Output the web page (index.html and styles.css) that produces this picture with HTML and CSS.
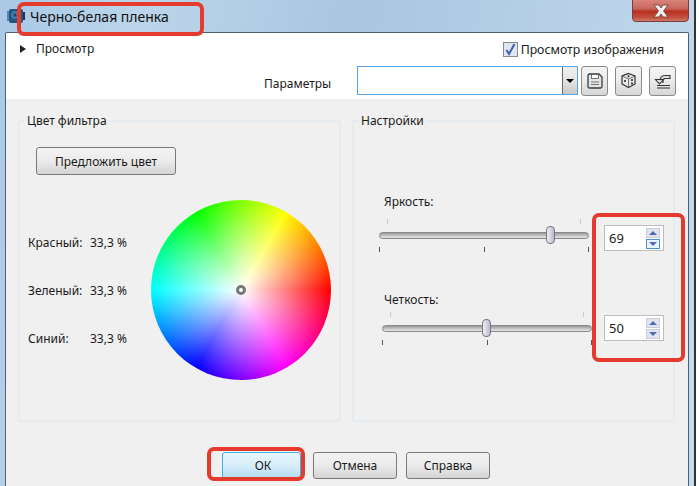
FILE: index.html
```html
<!DOCTYPE html>
<html lang="ru">

<head>
    <meta charset="UTF-8" />
    <title>Черно-белая пленка</title>
    <link rel="stylesheet" href="styles.css">
</head>

<body>
    <div class="screen">
        <div class="titlebar">
            <svg class="app-icon" width="20" height="16" viewBox="0 0 20 16">
                <path d="M1 3h3v10h-3z" fill="#4f86b4" />
                <path d="M3 3a2 2 0 0 1 2-2h10a2 2 0 0 1 2 2v10a2 2 0 0 1-2 2h-10a2 2 0 0 1-2-2z" fill="#24557e" />
                <circle cx="9" cy="7" r="4" fill="#3f7ba8" />
                <circle cx="9" cy="7" r="1.500" fill="#1c4464" />
                <path d="M17 4h2v8h-2z" fill="#16324e" />
            </svg>
            <span class="title">Черно-белая пленка</span>
            <div class="close">
                <svg width="22" height="14" viewBox="0 0 22 14">
                    <path d="M4 1h5l2 3 2-3h5l-4.500 6 4.500 6h-5l-2-3-2 3h-5l4.500-6z" fill="#f4eeee" stroke="#6b3a3a" stroke-width="0.800" />
                </svg>
            </div>
        </div>

        <div class="client">
            <div class="top">
                <div class="top-row">
                    <div class="expander">
                        <span class="arrow"></span>
                        <span>Просмотр</span>
                    </div>
                    <label class="check">
                        <span class="checkbox">
                            <svg width="13" height="13" viewBox="0 0 13 13">
                                <path d="M2.500 7l2.500 4 5.500-10" fill="none" stroke="#3f5fb0" stroke-width="2" />
                            </svg>
                        </span>
                        <span>Просмотр изображения</span>
                    </label>
                </div>
                <div class="params-row">
                    <span class="params-label">Параметры</span>
                    <div class="combo">
                        <span class="combo-btn"><span class="combo-arrow"></span></span>
                    </div>
                    <button class="icon-btn">
                        <svg width="16" height="16" viewBox="0 0 16 16">
                            <path d="M2.500 1h9.500l3 3v9.500a1.500 1.500 0 0 1-1.500 1.500h-11a1.500 1.500 0 0 1-1.500-1.500v-11a1.500 1.500 0 0 1 1.500-1.500z" fill="#e4e4e4" stroke="#3c3c3c" stroke-width="1.300" />
                            <rect x="4.500" y="1.500" width="7" height="4" fill="#fff" stroke="#555" stroke-width="0.800" />
                            <path d="M4 9h8M4 11.500h8" stroke="#777" stroke-width="1" />
                        </svg>
                    </button>
                    <button class="icon-btn">
                        <svg width="17" height="17" viewBox="0 0 17 17">
                            <path d="M8.500 1.500l6.500 2.500v8l-6.500 3.500-6.500-3.500v-8z" fill="#e8e8e8" stroke="#333" stroke-width="1.200" />
                            <path d="M2 4l6.500 3 6.500-3M8.500 7v8.500" fill="none" stroke="#555" stroke-width="0.800" />
                            <circle cx="8.500" cy="4.200" r="1" fill="#222" />
                            <circle cx="5" cy="9" r="1" fill="#222" />
                            <circle cx="12" cy="8" r="1" fill="#222" />
                            <circle cx="12" cy="11.500" r="1" fill="#222" />
                        </svg>
                    </button>
                    <button class="icon-btn">
                        <svg width="18" height="17" viewBox="0 0 18 17">
                            <path d="M6 11v-2.500c0-3 2-5 5-5h5v3h-5c-1 0-2 1-2 2v2.500" fill="#e0e0e0" stroke="#333" stroke-width="1.100" />
                            <path d="M1.500 7.500h8l-4 4.500z" fill="#e0e0e0" stroke="#333" stroke-width="1.100" />
                            <path d="M3 13.500h13M3 16h13" stroke="#333" stroke-width="1.200" />
                        </svg>
                    </button>
                </div>
            </div>

            <div class="main">
                <div class="panels">
                    <fieldset class="panel">
                        <legend>Цвет фильтра</legend>
                        <div class="color-content">
                            <button class="btn suggest-btn">Предложить цвет</button>
                            <div class="color-body">
                                <div class="channels">
                                    <div class="channel"><span class="channel-name">Красный:</span><span>33,3 %</span></div>
                                    <div class="channel"><span class="channel-name">Зеленый:</span><span>33,3 %</span></div>
                                    <div class="channel"><span class="channel-name">Синий:</span><span>33,3 %</span></div>
                                </div>
                                <div class="wheel"><span class="wheel-marker"></span></div>
                            </div>
                        </div>
                    </fieldset>

                    <fieldset class="panel">
                        <legend>Настройки</legend>
                        <div class="settings-content">
                            <div class="setting setting-first">
                                <div class="setting-label">Яркость:</div>
                                <div class="setting-row">
                                    <div class="slider">
                                        <div class="ticks ticks-top"><i></i><i></i></div>
                                        <div class="track"><span class="thumb" style="left: 81.500%"></span></div>
                                        <div class="ticks"><i></i><i></i><i></i></div>
                                    </div>
                                    <div class="spin">
                                        <span>69</span>
                                        <div class="spin-btns">
                                            <span class="spin-up"></span>
                                            <span class="spin-down spin-active"></span>
                                        </div>
                                    </div>
                                </div>
                            </div>
                            <div class="setting setting-second">
                                <div class="setting-label">Четкость:</div>
                                <div class="setting-row">
                                    <div class="slider">
                                        <div class="ticks ticks-top"><i></i><i></i></div>
                                        <div class="track"><span class="thumb" style="left: 49.500%"></span></div>
                                        <div class="ticks"><i></i><i></i><i></i></div>
                                    </div>
                                    <div class="spin">
                                        <span>50</span>
                                        <div class="spin-btns">
                                            <span class="spin-up"></span>
                                            <span class="spin-down"></span>
                                        </div>
                                    </div>
                                </div>
                            </div>
                        </div>
                    </fieldset>
                </div>

                <div class="footer">
                    <button class="btn btn-ok">ОК</button>
                    <button class="btn btn-cancel">Отмена</button>
                    <button class="btn btn-help">Справка</button>
                </div>
            </div>
        </div>

        <div class="mark mark-title"></div>
        <div class="mark mark-spin"></div>
        <div class="mark mark-ok"></div>
    </div>
</body>

</html>
```

FILE: styles.css
```css
* {
    margin: 0;
    padding: 0;
    box-sizing: border-box;
}

body {
    width: 699px;
    height: 486px;
    overflow: hidden;
    background: #fff;
    font-family: 'Noto Sans', sans-serif;
    font-size: 12px;
    color: #1a1a1a;
}

.screen {
    position: relative;
    width: 696px;
    height: 486px;
    padding: 0 5px 0 5px;
    display: flex;
    flex-direction: column;
    background: linear-gradient(100deg, #a8c8e6 0%, #bcd5ea 18%, #aac6e0 45%, #b0cbe3 60%, #c6dcee 100%);
    border-right: 2px solid #333;
    overflow: hidden;
}

.titlebar {
    height: 32px;
    flex: none;
    display: flex;
    align-items: flex-start;
    position: relative;
}

.app-icon {
    margin: 8px 0 0 1px;
}

.title {
    margin: 7px 0 0 4px;
    font-size: 14px;
    line-height: 20px;
    color: #111;
}

.close {
    position: absolute;
    top: -1px;
    right: 0;
    width: 57px;
    height: 23px;
    display: flex;
    align-items: center;
    justify-content: center;
    border: 1px solid #7d3b3b;
    border-radius: 0 0 4px 4px;
    background: linear-gradient(#d8837a 0%, #c8675c 40%, #b8301f 55%, #c4533f 85%, #cf7a6d 100%);
}

.client {
    flex: 1;
    display: flex;
    flex-direction: column;
    border: 1px solid #4d5f70;
    border-bottom: none;
    border-radius: 2px 2px 0 0;
    background: #fff;
    min-height: 0;
}

.top {
    height: 66px;
    flex: none;
    padding: 0 12px 0 14px;
}

.top-row {
    height: 33px;
    display: flex;
    align-items: center;
    justify-content: space-between;
    padding-right: 12px;
}

.expander {
    display: flex;
    align-items: center;
    gap: 10px;
    margin-top: -2px;
}

.arrow {
    width: 0;
    height: 0;
    border-left: 6px solid #222;
    border-top: 4px solid transparent;
    border-bottom: 4px solid transparent;
}

.check {
    display: flex;
    align-items: center;
    gap: 3px;
    font-size: 12.300px;
    color: #222;
}

.checkbox {
    width: 15px;
    height: 15px;
    display: flex;
    align-items: center;
    justify-content: center;
    border: 1px solid #8a8a8a;
    background: #dfe6f2;
}

.params-row {
    display: flex;
    align-items: center;
    height: 31px;
    margin-top: -1px;
}

.params-label {
    margin: 5px 0 0 244px;
    width: 93px;
}

.combo {
    width: 221px;
    height: 29px;
    display: flex;
    justify-content: flex-end;
    border: 1px solid #5aa5e8;
    background: #fff;
}

.combo-btn {
    width: 15px;
    display: flex;
    align-items: center;
    justify-content: center;
    border-left: 1px solid #666;
    background: linear-gradient(#f0f0f0, #e4e4e4 50%, #c8c8c8);
}

.combo-arrow {
    width: 0;
    height: 0;
    border-top: 4px solid #000;
    border-left: 4.500px solid transparent;
    border-right: 4.500px solid transparent;
}

.icon-btn {
    width: 27px;
    height: 30px;
    margin-left: 7px;
    display: flex;
    align-items: center;
    justify-content: center;
    border: 1px solid #8a8a8a;
    border-radius: 3px;
    background: linear-gradient(#f4f4f4, #ebebeb 50%, #d6d6d6);
}

.combo + .icon-btn {
    margin-left: 3px;
}

.main {
    flex: 1;
    display: flex;
    flex-direction: column;
    background: #f0f0f0;
    min-height: 0;
}

.panels {
    display: flex;
    gap: 11px;
    padding: 13px 0 0 12px;
}

.panel {
    width: 323px;
    height: 310px;
    border: 2px solid #e6ebf0;
    border-radius: 3px;
    min-width: 0;
}

.panel legend {
    margin-left: 5px;
    padding: 0 2px;
    line-height: 17px;
}

.color-content {
    padding-left: 8px;
}

.settings-content {
    padding-left: 30px;
}

.btn {
    font-family: inherit;
    font-size: 12px;
    color: #1a1a1a;
    border: 1px solid #7a7a7a;
    border-radius: 3px;
    background: linear-gradient(#f3f3f3, #ebebeb 50%, #d4d4d4);
}

.suggest-btn {
    display: block;
    width: 140px;
    height: 28px;
    margin: 18px 0 0 8px;
}

.color-body {
    display: flex;
    margin-top: 25px;
}

.channels {
    width: 123px;
    display: flex;
    flex-direction: column;
    gap: 30px;
    padding-top: 34px;
}

.channel {
    display: flex;
    height: 18px;
    line-height: 18px;
}

.channel-name {
    width: 62px;
}

.wheel {
    position: relative;
    width: 180px;
    height: 180px;
    border-radius: 50%;
    background: radial-gradient(circle, #fff 0%, rgba(255, 255, 255, 0) 70%),
        conic-gradient(from 90deg, #f00, #f0f, #00f, #0ff, #0f0, #ff0, #f00);
}

.wheel-marker {
    position: absolute;
    left: 85px;
    top: 85px;
    width: 10px;
    height: 10px;
    border-radius: 50%;
    border: 3px solid #777;
    background: #fff;
}

.setting-label {
    line-height: 17px;
}

.setting-first {
    margin-top: 64px;
}

.setting-second {
    margin-top: 39px;
}

.setting-row {
    display: flex;
    margin: 9px 0 0 -5px;
}

.setting-second .setting-row {
    margin: 4px 0 0 -2px;
}

.slider {
    width: 210px;
}

.ticks {
    display: flex;
    justify-content: space-between;
    height: 5px;
}

.ticks i {
    width: 1px;
    height: 5px;
    background: #555;
}

.ticks-top {
    padding: 0 8px;
}

.ticks-top i {
    background: #ccc;
}

.track {
    position: relative;
    height: 7px;
    margin: 8px 0 8px;
    border: 1px solid #888;
    border-radius: 4px;
    background: linear-gradient(#9a9a9a, #e8e8e8);
}

.thumb {
    position: absolute;
    top: -7px;
    width: 9px;
    height: 18px;
    margin-left: -4px;
    border: 1px solid #777;
    border-radius: 4px;
    background: linear-gradient(90deg, #eeeef4, #b8bace);
}

.spin {
    width: 60px;
    height: 26px;
    margin: 6px 0 0 15px;
    display: flex;
    align-items: center;
    justify-content: space-between;
    padding: 0 3px 0 4px;
    border: 1px solid #bdbdbd;
    background: #fff;
    font-size: 13px;
}

.setting-second .spin {
    margin: 3px 0 0 12px;
}

.spin-btns {
    display: flex;
    flex-direction: column;
    gap: 1px;
}

.spin-up,
.spin-down {
    width: 14px;
    height: 10px;
    display: flex;
    align-items: center;
    justify-content: center;
    background: #dfe4f0;
    border: 1px solid #c8ccd8;
}

.spin-up::after {
    content: "";
    border-bottom: 4px solid #5468b0;
    border-left: 4px solid transparent;
    border-right: 4px solid transparent;
}

.spin-down::after {
    content: "";
    border-top: 4px solid #5468b0;
    border-left: 4px solid transparent;
    border-right: 4px solid transparent;
}

.spin-active {
    border-color: #4a90d8;
    background: #eaf4fc;
}

.footer {
    display: flex;
    padding: 30px 0 0 216px;
}

.footer .btn {
    height: 27px;
}

.btn-ok {
    width: 79px;
    padding-left: 3px;
    border-color: #3cb0e8;
    background: linear-gradient(#e8f6fd, #d6eefa 50%, #b4dcf2);
}

.btn-cancel {
    width: 84px;
    margin-left: 12px;
}

.btn-help {
    width: 84px;
    margin-left: 9px;
}

.mark {
    position: absolute;
    border: 4px solid #e53a2e;
    border-radius: 7px;
}

.mark-title {
    left: 17px;
    top: 2px;
    width: 187px;
    height: 34px;
}

.mark-spin {
    left: 592px;
    top: 213px;
    width: 93px;
    height: 149px;
}

.mark-ok {
    left: 207px;
    top: 447px;
    width: 98px;
    height: 34px;
}
```
